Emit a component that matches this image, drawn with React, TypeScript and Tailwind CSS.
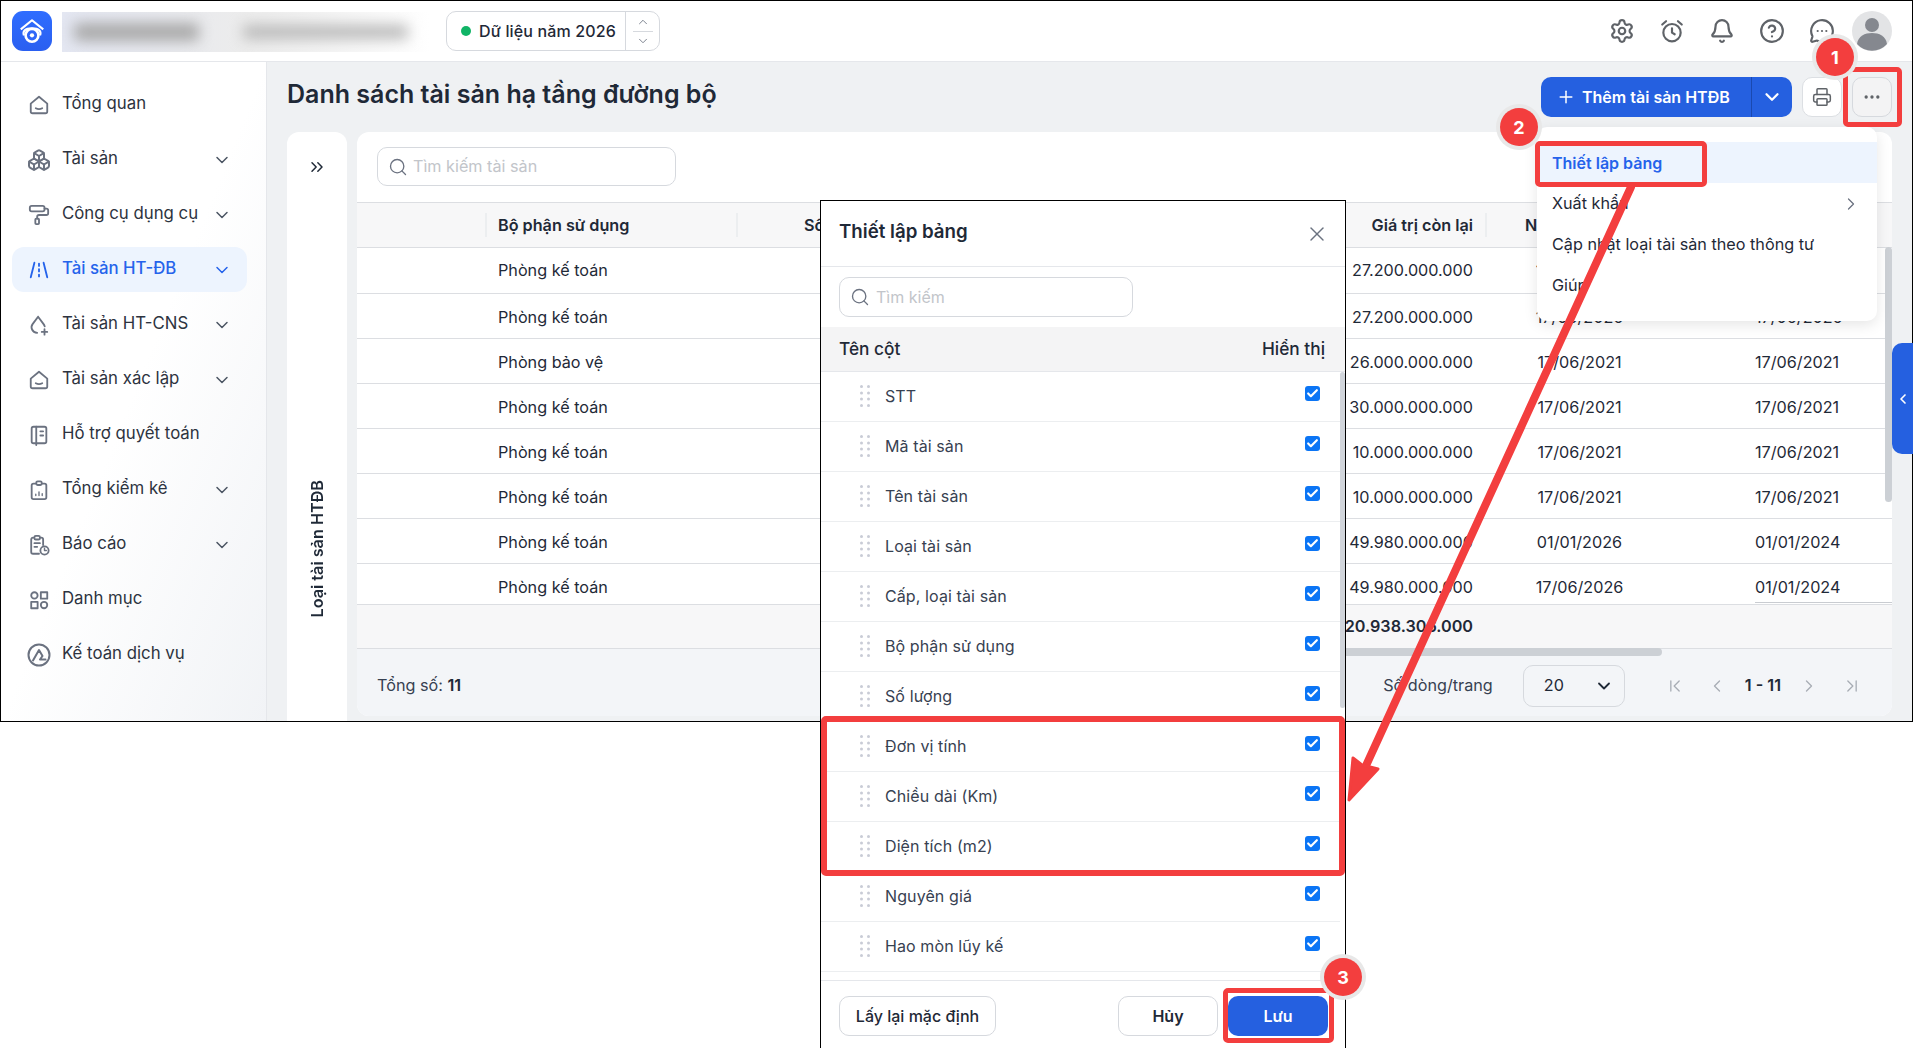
import { Settings, Bell, CircleHelp, MessageCircleMore, Printer, Ellipsis, Plus, ChevronDown, ChevronUp, ChevronLeft, ChevronRight, ChevronFirst, ChevronLast, ChevronsRight, Search, X, Check, Boxes, PaintRoller } from "lucide-react";
import type { ReactNode } from "react";

const Ic = ({ children, className = "w-[22px] h-[22px]" }: { children: ReactNode; className?: string }) => (
  <svg viewBox="0 0 24 24" fill="none" stroke="currentColor" strokeWidth="2" strokeLinecap="round" strokeLinejoin="round" className={className}>
    {children}
  </svg>
);

const HouseIcon = () => (
  <Ic>
    <path d="M3 10.5 12 3l9 7.5V19a2 2 0 0 1-2 2H5a2 2 0 0 1-2-2z" />
    <path d="M8.5 15.5c2.2 1.2 4.8 1.2 7 0" />
  </Ic>
);
const RoadIcon = () => (
  <Ic>
    <path d="M7 4 3 20M17 4l4 16" />
    <path d="M12 5v14" strokeDasharray="2.5 3.5" />
  </Ic>
);
const DropIcon = () => (
  <Ic>
    <path d="M11 3 5 11c-2.600 3.600-.6 9 5 9.500M11 3l6 8c.6.800 1 1.600 1.200 2.500" />
    <path d="M18 16.500v6M15 19.500h6" />
  </Ic>
);
const BookIcon = () => (
  <Ic>
    <rect x="4" y="3" width="16" height="18" rx="2" />
    <path d="M9 3v20M13.500 8h3M13.500 12.500h3" />
  </Ic>
);
const ClipIcon = () => (
  <Ic>
    <rect x="4" y="5" width="16" height="17" rx="2" />
    <rect x="9" y="2.500" width="6" height="4" rx="1.500" fill="#fff" />
    <path d="M8.500 18v-1.500M12 18v-4M15.500 18v-2" strokeWidth="1.500" />
  </Ic>
);
const ReportIcon = () => (
  <Ic>
    <path d="M12 21.500H5.500a2 2 0 0 1-2-2V6a2 2 0 0 1 2-2h9a2 2 0 0 1 2 2v6" />
    <rect x="7" y="2" width="6" height="4" rx="1.500" fill="#fff" />
    <path d="M7 10h6M7 14h3" />
    <circle cx="18" cy="18" r="4.500" />
    <path d="M18 15.500V18h2" strokeWidth="1.500" />
  </Ic>
);
const ShapesIcon = () => (
  <Ic>
    <circle cx="7" cy="7" r="3.500" />
    <rect x="14" y="3.500" width="7" height="7" />
    <rect x="3.500" y="14" width="7" height="7" />
    <circle cx="17.500" cy="17.500" r="3.500" />
  </Ic>
);
const ServiceIcon = () => (
  <Ic className="w-[26px] h-[26px]">
    <circle cx="12" cy="12" r="10.500" />
    <path d="M6 17.500 12 7l3.500 6-2.500 3.500h5.500" />
  </Ic>
);
const AlarmIcon = () => (
  <Ic className="w-[26px] h-[26px]">
    <circle cx="12" cy="13.500" r="8" />
    <path d="M12 9.500v4l2.500 1.500M3 6l3.500-3M21 6l-3.500-3" />
  </Ic>
);

const nav: { label: string; icon: ReactNode; sub?: boolean; active?: boolean }[] = [
  { label: "Tổng quan", icon: <HouseIcon /> },
  { label: "Tài sản", icon: <Boxes className="w-[24px] h-[24px]" />, sub: true },
  { label: "Công cụ dụng cụ", icon: <PaintRoller className="w-[22px] h-[22px]" />, sub: true },
  { label: "Tài sản HT-ĐB", icon: <RoadIcon />, sub: true, active: true },
  { label: "Tài sản HT-CNS", icon: <DropIcon />, sub: true },
  { label: "Tài sản xác lập", icon: <HouseIcon />, sub: true },
  { label: "Hỗ trợ quyết toán", icon: <BookIcon /> },
  { label: "Tổng kiểm kê", icon: <ClipIcon />, sub: true },
  { label: "Báo cáo", icon: <ReportIcon />, sub: true },
  { label: "Danh mục", icon: <ShapesIcon /> },
  { label: "Kế toán dịch vụ", icon: <ServiceIcon /> },
];

const rows = [
  ["Phòng kế toán", "27.200.000.000", "17/06/2026", "17/06/2026"],
  ["Phòng kế toán", "27.200.000.000", "17/06/2026", "17/06/2026"],
  ["Phòng bảo vệ", "26.000.000.000", "17/06/2021", "17/06/2021"],
  ["Phòng kế toán", "30.000.000.000", "17/06/2021", "17/06/2021"],
  ["Phòng kế toán", "10.000.000.000", "17/06/2021", "17/06/2021"],
  ["Phòng kế toán", "10.000.000.000", "17/06/2021", "17/06/2021"],
  ["Phòng kế toán", "49.980.000.000", "01/01/2026", "01/01/2024"],
  ["Phòng kế toán", "49.980.000.000", "17/06/2026", "01/01/2024"],
];

const columns = ["STT", "Mã tài sản", "Tên tài sản", "Loại tài sản", "Cấp, loại tài sản", "Bộ phận sử dụng", "Số lượng", "Đơn vị tính", "Chiều dài (Km)", "Diện tích (m2)", "Nguyên giá", "Hao mòn lũy kế"];

const DragDots = () => (
  <svg width="10" height="22" viewBox="0 0 10 22" fill="#c9ccd6" className="mb-[2px]">
    {[1.5, 8.5].map((cx) => [1.5, 8, 14, 20.5].map((cy) => <circle key={`${cx}-${cy}`} cx={cx} cy={cy} r="1.500" />))}
  </svg>
);

const Badge = ({ n, className }: { n: number; className: string }) => (
  <div className={`absolute z-40 w-[38px] h-[38px] rounded-full bg-[#f33e3e] ring-4 ring-[#e8e8e8] text-white text-[18px] font-bold flex items-center justify-center ${className}`}>{n}</div>
);

export default function App() {
  return (
    <div className="relative w-[1913px] h-[1048px] bg-white overflow-hidden text-[16px] text-[#1f2937] [font-family:Inter,sans-serif]">
      <div className="h-[722px] border border-black overflow-hidden flex flex-col bg-[#eff1f3]">
        <header className="h-[61px] shrink-0 bg-white border-b border-[#e5e7eb] flex items-center pl-[11px] pr-[20px]">
          <div className="w-[40px] h-[40px] rounded-[11px] bg-linear-to-b from-[#2f6dff] to-[#2a5ff0] flex items-center justify-center">
            <svg width="30" height="30" viewBox="0 0 28 28" fill="none" stroke="#fff" strokeWidth="2" strokeLinejoin="round">
              <path d="M3.500 12.500 14 4l10.500 8.500" />
              <path d="M6.500 18c-1.500-4 1-6.500 7.500-6.500s9 2.500 7.500 6.500" />
              <circle cx="14" cy="18" r="6" fill="#2f66f8" strokeWidth="2.500" />
              <circle cx="14" cy="18" r="2" fill="#fff" stroke="none" />
            </svg>
          </div>
          <div className="relative ml-[10px] mt-[2px] w-[368px] h-[40px] overflow-hidden bg-linear-to-r from-[#e4e7f2] via-[#ececec] to-white flex items-center gap-[44px] pl-[12px]">
            <div className="w-[125px] h-[18px] rounded bg-[#a9a9a9] blur-[7px]" />
            <div className="w-[165px] h-[14px] rounded bg-[#b9b9b9] blur-[7px]" />
          </div>
          <div className="ml-[16px] w-[214px] h-[40px] rounded-[10px] border border-[#d6d9de] flex items-center">
            <span className="ml-[14px] w-[10px] h-[10px] rounded-full bg-[#10b466]" />
            <span className="ml-[8px] text-[16px] font-medium tracking-[0.15px] whitespace-nowrap text-[#1f2937]">Dữ liệu năm 2026</span>
            <div className="ml-auto w-[34px] h-full border-l border-[#d6d9de] flex flex-col items-center justify-center text-[#6b7280]">
              <ChevronUp className="w-[14px] h-[14px]" strokeWidth={1.5} />
              <span className="w-[20px] h-px bg-[#d6d9de] my-[2px]" />
              <ChevronDown className="w-[14px] h-[14px]" strokeWidth={1.5} />
            </div>
          </div>
          <div className="ml-auto flex items-center text-[#5f6368]">
            <div className="flex items-center gap-[24px]">
              <Settings className="w-[26px] h-[26px]" strokeWidth={2} />
              <AlarmIcon />
              <Bell className="w-[26px] h-[26px]" strokeWidth={2} />
              <CircleHelp className="w-[26px] h-[26px]" strokeWidth={2} />
              <MessageCircleMore className="w-[26px] h-[26px]" strokeWidth={2} />
            </div>
            <svg width="40" height="40" viewBox="0 0 40 40" className="ml-[17px]">
              <circle cx="20" cy="20" r="20" fill="#e3e4e6" />
              <circle cx="20" cy="14" r="7" fill="#85888f" />
              <path d="M5 33c1-8 8-11 15-11s14 3 15 11a20 20 0 0 1-30 0z" fill="#85888f" />
            </svg>
          </div>
        </header>

        <div className="flex-1 flex min-h-0">
          <aside className="w-[266px] shrink-0 bg-linear-to-br from-white via-white to-[#f1f3f6] border-r border-[#e5e7eb] pt-[20px] pl-[11px] pr-[19px]">
            {nav.map((item) => (
              <div key={item.label} className={`h-[45px] mb-[10px] rounded-[12px] flex items-center pl-[15px] pr-[15px] ${item.active ? "bg-[#edf4fe] text-[#2563eb]" : "text-[#6b7280]"}`}>
                <span className="w-[24px] flex justify-center">{item.icon}</span>
                <span className={`ml-[11px] mb-[2px] text-[16.8px] whitespace-nowrap ${item.active ? "font-medium text-[#2563eb]" : "text-[#2d3340]"}`}>{item.label}</span>
                {item.sub && <ChevronDown className={`ml-auto w-[20px] h-[20px] ${item.active ? "text-[#2563eb]" : "text-[#4b5563]"}`} strokeWidth={1.8} />}
              </div>
            ))}
          </aside>

          <main className="flex-1 min-w-0 pl-[20px] pr-[20px] pt-[15px]">
            <div className="h-[40px] flex items-center">
              <h1 className="mb-[4px] text-[25px] font-semibold text-[#1f2937] whitespace-nowrap">Danh sách tài sản hạ tầng đường bộ</h1>
              <div className="ml-auto flex items-center">
                <div className="w-[251px] h-[40px] rounded-[10px] bg-[#2560e0] text-white flex items-center font-semibold">
                  <div className="flex-1 flex items-center pl-[15px] gap-[6px] whitespace-nowrap">
                    <Plus className="w-[20px] h-[20px]" strokeWidth={1.8} />
                    Thêm tài sản HTĐB
                  </div>
                  <div className="w-[41px] h-full border-l border-[#1a49b0] flex items-center justify-center">
                    <ChevronDown className="w-[22px] h-[22px]" strokeWidth={2.5} />
                  </div>
                </div>
                <div className="ml-[10px] w-[40px] h-[40px] rounded-[10px] bg-white border border-[#dcdfe3] flex items-center justify-center text-[#5f6368]">
                  <Printer className="w-[20px] h-[20px]" strokeWidth={1.8} />
                </div>
                <div className="ml-[10px] w-[40px] h-[40px] rounded-[10px] bg-[#f3f3f4] border border-[#d6d9de] flex items-center justify-center text-[#5f6368]">
                  <Ellipsis className="w-[20px] h-[20px]" strokeWidth={2} />
                </div>
              </div>
            </div>

            <div className="mt-[15px] flex gap-[10px] h-[640px]">
              <div className="w-[60px] shrink-0 bg-white rounded-t-[12px] flex flex-col items-center pt-[25px]">
                <ChevronsRight className="w-[20px] h-[20px] text-[#1f2937]" strokeWidth={1.8} />
                <div className="mt-[303px] [writing-mode:vertical-rl] rotate-180 text-[16.2px] font-semibold whitespace-nowrap text-[#1f2937]">Loại tài sản HTĐB</div>
              </div>

              <div className="flex-1 min-w-0 h-[584px] rounded-[12px] bg-white overflow-hidden flex flex-col text-[16.2px]">
                <div className="h-[70px] shrink-0 pl-[20px] pt-[15px]">
                  <div className="w-[299px] h-[39px] rounded-[10px] border border-[#d6d9de] flex items-center pl-[10px] gap-[5px] text-[#c2c5ca]">
                    <Search className="w-[20px] h-[20px] text-[#6b7280]" strokeWidth={1.6} />
                    Tìm kiếm tài sản
                  </div>
                </div>
                <div className="relative flex-1 min-h-0 flex flex-col">
                  <div className="h-[46px] shrink-0 bg-[#f7f7f8] border-y border-[#dcdee2] flex items-center font-semibold text-[#1f2937] whitespace-nowrap overflow-hidden">
                    <div className="w-[128px] shrink-0 h-[24px]" />
                    <div className="w-[251px] shrink-0 h-[24px] border-l-2 border-[#eceef0] pl-[11px] leading-[24px]">Bộ phận sử dụng</div>
                    <div className="w-[749px] shrink-0 h-[24px] border-l-2 border-[#eceef0] pl-[66px] pr-[12px] leading-[24px] flex justify-between">
                      <span>Số lượng</span>
                      <span>Giá trị còn lại</span>
                    </div>
                    <div className="w-[189px] shrink-0 h-[24px] border-l-2 border-[#eceef0] pl-[38px] leading-[24px]">Ngày ghi tăng</div>
                  </div>
                  <div className="h-[356px] shrink-0 overflow-hidden">
                    {rows.map((r, i) => (
                      <div key={i} className="h-[45px] pt-[2px] first:h-[46px] first:pt-0 border-b border-[#dcdee2] flex items-center whitespace-nowrap text-[#1f2937]">
                        <div className="w-[141px] shrink-0" />
                        <div className="w-[400px] shrink-0">{r[0]}</div>
                        <div className="w-[575px] shrink-0 text-right">{r[1]}</div>
                        <div className="w-[12px] shrink-0" />
                        <div className="w-[189px] shrink-0 text-center">{r[2]}</div>
                        <div className="w-[218px] shrink-0 pl-[81px]">{r[3]}</div>
                      </div>
                    ))}
                  </div>
                  <div className="h-[45px] shrink-0 bg-[#f7f7f8] border-y border-[#dcdee2] flex items-center font-semibold text-[#1f2937]">
                    <div className="w-[1116px] shrink-0 text-right">20.938.306.000</div>
                  </div>
                  <div className="flex-1 bg-[#f3f5f8] flex items-center pl-[20px] pr-[30px] pt-[6px] text-[#374151]">
                    <span>Tổng số: <b className="font-semibold text-[#1f2937]">11</b></span>
                    <span className="ml-auto">Số dòng/trang</span>
                    <div className="ml-[30px] w-[102px] h-[42px] rounded-[10px] border border-[#d6d9de] flex items-center pl-[20px] pr-[10px] text-[#1f2937]">
                      20
                      <ChevronDown className="ml-auto w-[20px] h-[20px] text-[#1f2937]" strokeWidth={2.2} />
                    </div>
                    <ChevronFirst className="ml-[40px] w-[20px] h-[20px] text-[#a8adb5]" strokeWidth={1.6} />
                    <ChevronLeft className="ml-[22px] w-[20px] h-[20px] text-[#a8adb5]" strokeWidth={1.6} />
                    <span className="mx-[18px] font-semibold text-[#1f2937] whitespace-nowrap">1 - 11</span>
                    <ChevronRight className="w-[20px] h-[20px] text-[#a8adb5]" strokeWidth={1.6} />
                    <ChevronLast className="ml-[23px] w-[20px] h-[20px] text-[#a8adb5]" strokeWidth={1.6} />
                  </div>
                  <div className="absolute right-0 top-[45px] w-[7px] h-[255px] rounded bg-[#ccd0d5]" />
                  <div className="absolute left-[800px] top-[446px] w-[505px] h-[8px] rounded bg-[#ccd0d5]" />
                  <div className="absolute right-0 top-[400px] w-[137px] h-px bg-[#c9ccd1]" />
                </div>
              </div>
            </div>
          </main>
        </div>
      </div>

      {/* nút thu gọn bên phải */}
      <div className="absolute left-[1892px] top-[343px] w-[21px] h-[111px] rounded-l-[10px] bg-[#2560e0] flex items-center justify-center text-white">
        <ChevronLeft className="w-[16px] h-[16px]" strokeWidth={2.5} />
      </div>

      {/* menu */}
      <div className="absolute z-20 left-[1537px] top-[127px] w-[340px] h-[194px] rounded-[10px] bg-white shadow-[0_4px_14px_rgba(0,0,0,0.1)] pt-[15px] text-[16.2px] text-[#1f2937] whitespace-nowrap">
        <div className="h-[41px] bg-[#edf4fe] flex items-center pl-[15px] text-[16px] font-semibold text-[#2563eb]">Thiết lập bảng</div>
        <div className="h-[41px] flex items-center pl-[15px] pr-[16px]">Xuất khẩu<ChevronRight className="ml-auto w-[20px] h-[20px] text-[#6b7280]" strokeWidth={1.5} /></div>
        <div className="h-[41px] flex items-center pl-[15px]">Cập nhật loại tài sản theo thông tư</div>
        <div className="h-[41px] flex items-center pl-[15px]">Giúp</div>
      </div>

      {/* modal */}
      <div className="absolute z-20 left-[820px] top-[200px] w-[526px] h-[848px] bg-white border-x border-t border-black flex flex-col text-[#1f2937]">
        <div className="h-[66px] shrink-0 border-b border-[#e5e7eb] flex items-center pl-[18px] pr-[16px]">
          <span className="mb-[2px] text-[18.7px] font-semibold">Thiết lập bảng</span>
          <X className="ml-auto w-[24px] h-[24px] text-[#6b7280]" strokeWidth={1.4} />
        </div>
        <div className="h-[60px] shrink-0 pl-[18px] pt-[10px]">
          <div className="w-[294px] h-[40px] rounded-[10px] border border-[#d6d9de] flex items-center pl-[10px] gap-[6px] text-[#c2c5ca]">
            <Search className="w-[20px] h-[20px] text-[#6b7280]" strokeWidth={1.6} />
            Tìm kiếm
          </div>
        </div>
        <div className="h-[45px] shrink-0 bg-[#f4f4f5] border-b border-[#e5e7eb] flex items-center justify-between pl-[18px] pr-[20px] text-[17.3px] font-medium text-[#1f2937]">
          <span>Tên cột</span>
          <span>Hiển thị</span>
        </div>
        <div className="relative h-[608px] shrink-0 overflow-hidden pr-[5px]">
          {columns.map((c) => (
            <div key={c} className="h-[50px] border-b border-[#eceef0] flex items-center pl-[39px] pr-[20px] text-[#374151]">
              <DragDots />
              <span className="ml-[15px] mb-[2px] tracking-[0.1px] whitespace-nowrap">{c}</span>
              <span className="ml-auto mb-[6px] w-[15px] h-[15px] rounded-[3px] bg-[#0b75f5] flex items-center justify-center text-white">
                <Check className="w-[13px] h-[13px]" strokeWidth={4} />
              </span>
            </div>
          ))}
          <div className="absolute right-0 top-0 w-[5px] h-[336px] rounded bg-[#d1d5db]" />
        </div>
        <div className="flex-1 border-t border-[#e5e7eb] flex items-start pt-[15px] pl-[18px] pr-[17px] font-medium">
          <div className="w-[157px] h-[40px] rounded-[10px] border border-[#d6d9de] flex items-center justify-center whitespace-nowrap">Lấy lại mặc định</div>
          <div className="ml-auto w-[100px] h-[40px] rounded-[10px] border border-[#d6d9de] flex items-center justify-center font-semibold">Hủy</div>
          <div className="ml-[10px] w-[100px] h-[40px] rounded-[10px] bg-[#2560e0] text-white flex items-center justify-center font-semibold">Lưu</div>
        </div>
      </div>

      {/* chú thích đỏ */}
      <div className="absolute z-30 left-[1843px] top-[67px] w-[59px] h-[60px] border-[5px] border-[#f33e3e] rounded-[5px]" />
      <div className="absolute z-30 left-[1535px] top-[141px] w-[172px] h-[46px] border-[5px] border-[#f33e3e] rounded-[5px]" />
      <div className="absolute z-30 left-[821px] top-[716px] w-[524px] h-[160px] border-[6px] border-[#f33e3e] rounded-[5px]" />
      <div className="absolute z-30 left-[1223px] top-[988px] w-[111px] h-[55px] border-[5px] border-[#f33e3e] rounded-[5px]" />
      <Badge n={1} className="left-[1816px] top-[38px]" />
      <Badge n={2} className="left-[1500px] top-[108px]" />
      <Badge n={3} className="left-[1324px] top-[958px]" />
      <svg className="absolute z-30 left-0 top-0 pointer-events-none" width="1913" height="1048" fill="#f33e3e">
        <path d="M1631 187 1364 770" stroke="#f33e3e" strokeWidth="8" strokeLinecap="round" fill="none" />
        <path d="M1349 800 1353 758 1362 765 1378 769z" stroke="#f33e3e" strokeWidth="3" strokeLinejoin="round" />
      </svg>
    </div>
  );
}
